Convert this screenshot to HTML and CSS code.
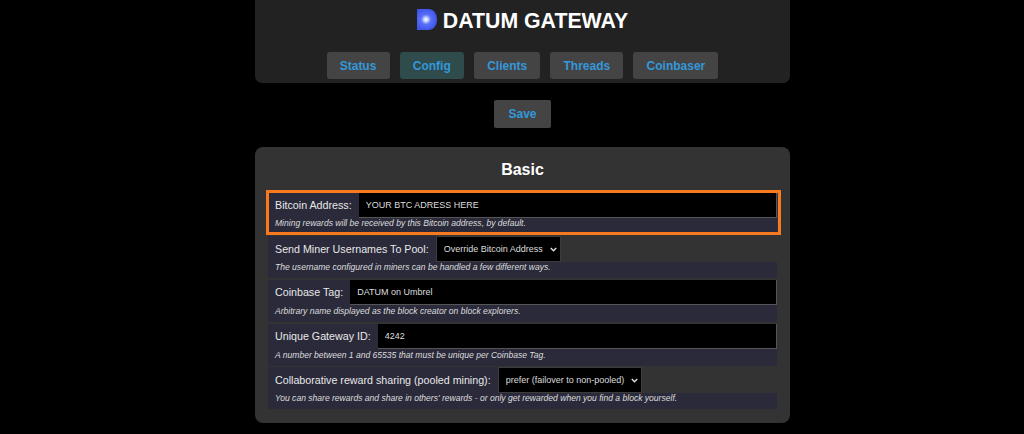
FILE: index.html
```html
<!DOCTYPE html>
<html lang="en">
<head>
    <meta charset="UTF-8">
    <title>DATUM Gateway</title>
    <link rel="stylesheet" href="styles.css">
</head>
<body>
    <div class="container">
        <header class="header">
            <h1 class="title">
                <svg class="logo" width="21" height="21" viewBox="0 0 21 21">
                    <defs>
                        <radialGradient id="glow" cx="9" cy="10.500" r="11" gradientUnits="userSpaceOnUse">
                            <stop offset="0" stop-color="#ffffff"/>
                            <stop offset="0.18" stop-color="#c8d4ff"/>
                            <stop offset="0.45" stop-color="#5a70f8"/>
                            <stop offset="1" stop-color="#3f55ea"/>
                        </radialGradient>
                    </defs>
                    <path d="M0 0H11C17 0 20 5 20 10.500C20 16 17 21 11 21H0Z" fill="url(#glow)"/>
                </svg>
                DATUM GATEWAY
            </h1>
            <nav class="nav">
                <a class="btn">Status</a>
                <a class="btn active">Config</a>
                <a class="btn">Clients</a>
                <a class="btn">Threads</a>
                <a class="btn">Coinbaser</a>
            </nav>
        </header>

        <div class="save-row">
            <button type="button" class="btn">Save</button>
        </div>

        <section class="panel">
            <h2>Basic</h2>

            <div class="field highlight">
                <div class="line">
                    <label>Bitcoin Address:</label>
                    <input type="text" value="YOUR BTC ADRESS HERE">
                </div>
                <p class="note">Mining rewards will be received by this Bitcoin address, by default.</p>
            </div>

            <div class="field">
                <div class="line line-select">
                    <label>Send Miner Usernames To Pool:</label>
                    <select class="select-user"><option>Override Bitcoin Address</option></select>
                </div>
                <p class="note">The username configured in miners can be handled a few different ways.</p>
            </div>

            <div class="field">
                <div class="line">
                    <label>Coinbase Tag:</label>
                    <input type="text" value="DATUM on Umbrel">
                </div>
                <p class="note">Arbitrary name displayed as the block creator on block explorers.</p>
            </div>

            <div class="field">
                <div class="line">
                    <label>Unique Gateway ID:</label>
                    <input type="text" value="4242">
                </div>
                <p class="note">A number between 1 and 65535 that must be unique per Coinbase Tag.</p>
            </div>

            <div class="field">
                <div class="line line-select">
                    <label>Collaborative reward sharing (pooled mining):</label>
                    <select class="select-pool"><option>prefer (failover to non-pooled)</option></select>
                </div>
                <p class="note">You can share rewards and share in others' rewards - or only get rewarded when you find a block yourself.</p>
            </div>
        </section>
    </div>
</body>
</html>
```

FILE: styles.css
```css
body {
    margin: 0;
    background-color: #000;
    color: #fff;
    font-family: "Liberation Sans", Arial, sans-serif;
    overflow: hidden;
}

.container {
    width: 535px;
    margin-left: 255px;
}

.header {
    height: 83px;
    box-sizing: border-box;
    padding-top: 9px;
    background-color: #222;
    border-radius: 0 0 7px 7px;
}

.title {
    display: flex;
    justify-content: center;
    align-items: flex-start;
    gap: 5px;
    height: 24px;
    margin: 0;
    font-size: 21.300px;
    line-height: 24px;
}

.nav {
    display: flex;
    justify-content: center;
    gap: 10px;
    margin-top: 19px;
}

.btn {
    display: block;
    height: 27px;
    box-sizing: border-box;
    padding: 0 13.200px;
    border: none;
    border-radius: 3px;
    background-color: #444;
    color: #3498db;
    font-family: inherit;
    font-size: 12px;
    font-weight: bold;
    line-height: 28px;
}

.btn.active {
    background-color: #2f4b4c;
}

.save-row {
    display: flex;
    justify-content: center;
    margin-top: 17px;
}

.save-row .btn {
    height: 28px;
    padding: 0 14px;
    border-radius: 2px;
}

.panel {
    height: 276px;
    box-sizing: border-box;
    margin-top: 19px;
    padding: 1px 13px 0 13px;
    background-color: #333;
    border-radius: 8px;
}

.panel h2 {
    margin: 13px 0 14px;
    font-size: 16px;
    line-height: 18px;
    text-align: center;
}

.field {
    margin-bottom: 1.800px;
}

.highlight {
    position: relative;
    margin-bottom: 4px;
}

.highlight::before {
    content: "";
    position: absolute;
    top: -3px;
    right: -4px;
    bottom: -3px;
    left: -2px;
    border: 3px solid #f97a1e;
    pointer-events: none;
}

.line {
    display: flex;
    align-items: stretch;
    height: 25px;
}

.line-select {
    height: 26px;
}

.line label {
    display: flex;
    align-items: center;
    padding: 0 7px 1px;
    background-color: #2a2a3a;
    color: #e8e8e8;
    font-size: 10.700px;
    white-space: nowrap;
}

.line input {
    flex: 1;
    min-width: 0;
    box-sizing: border-box;
    padding: 0 7px;
    border: none;
    border-right: 1px solid #555;
    border-bottom: 1px solid #555;
    background-color: #000;
    color: #ddd;
    font-family: inherit;
    font-size: 9px;
}

.line select {
    appearance: none;
    box-sizing: border-box;
    padding: 0 0 0 7px;
    border: 1px solid #3c3c3c;
    border-radius: 0;
    background-color: #000;
    background-image: url("data:image/svg+xml,%3Csvg xmlns='http://www.w3.org/2000/svg' width='7' height='5'%3E%3Cpath d='M.8 1l2.700 2.700L6.200 1' fill='none' stroke='%23ddd' stroke-width='1.500'/%3E%3C/svg%3E");
    background-position: right 3px center;
    background-repeat: no-repeat;
    color: #ddd;
    font-family: inherit;
    font-size: 9px;
}

.select-user {
    width: 125px;
}

.select-pool {
    width: 144px;
}

.note {
    height: 17px;
    box-sizing: border-box;
    margin: 0;
    padding: 1px 7px 0;
    background-color: #2a2a3a;
    color: #ddd;
    font-size: 8.560px;
    font-style: italic;
    line-height: 11px;
}

.line-select + .note {
    height: 16px;
    padding-top: 0;
}

.highlight .note {
    height: 14px;
    padding-top: 0;
}
```
